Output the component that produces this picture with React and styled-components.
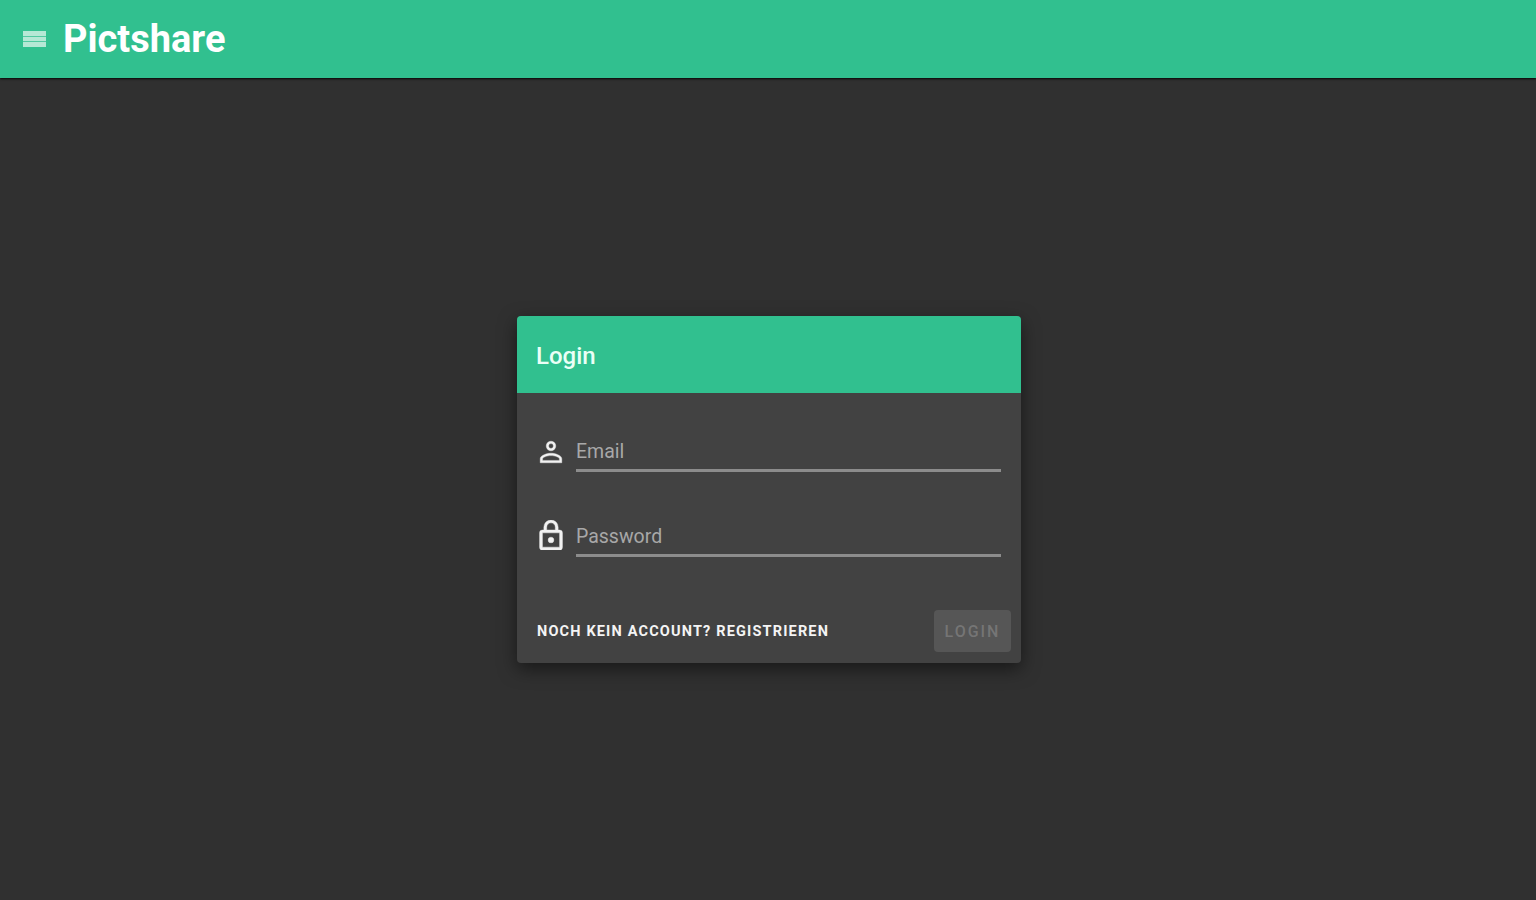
import React from 'react'
import styled, { createGlobalStyle } from 'styled-components'

const GlobalStyle = createGlobalStyle`
  html, body {
    margin: 0;
    height: 100%;
    background: #303030;
  }
  #root {
    height: 100%;
  }
`

const Page = styled.div`
  height: 900px;
  display: flex;
  flex-direction: column;
  overflow: hidden;
  font-family: Roboto, "Liberation Sans", sans-serif;
`

const AppBar = styled.header`
  height: 78px;
  flex: none;
  display: flex;
  align-items: center;
  padding-left: 23px;
  background: #31c08f;
  box-shadow: 0 1px 2px rgba(0, 0, 0, 0.9);
  position: relative;
`

const MenuIcon = styled.svg`
  width: 23px;
  height: 18px;
  margin-right: 17px;
  fill: #b5e8d5;
`

const Title = styled.h1`
  margin: 0;
  font-size: 38px;
  line-height: 78px;
  font-weight: 700;
  color: #fff;
`

const Main = styled.main`
  flex: 1;
  display: flex;
  align-items: center;
  justify-content: center;
  padding-left: 2px;
`

const Card = styled.section`
  width: 504px;
  height: 347px;
  display: flex;
  flex-direction: column;
  border-radius: 4px;
  overflow: hidden;
  background: #424242;
  box-shadow: 0 6px 18px rgba(0, 0, 0, 0.5);
`

const CardHeader = styled.div`
  height: 77px;
  flex: none;
  display: flex;
  align-items: center;
  padding: 3px 0 0 19px;
  box-sizing: border-box;
  background: #31c08f;
  color: #eafff6;
  font-size: 24px;
  font-weight: 500;
`

const Fields = styled.div`
  display: flex;
  flex-direction: column;
  gap: 51px;
  padding: 45px 20px 0 21px;
`

const Field = styled.div`
  display: flex;
  align-items: flex-start;
  gap: 12px;
  height: 34px;
`

const FieldIcon = styled.svg`
  width: 26px;
  height: ${(p) => p.$h}px;
  margin-top: ${(p) => p.$top}px;
  flex: none;
  fill: #f2f2f2;
  stroke: #f2f2f2;
  stroke-width: 0.3;
`

const InputLine = styled.div`
  flex: 1;
  height: 34px;
  box-sizing: border-box;
  border-bottom: 3px solid #8c8c8c;
  color: #a8a8a8;
  font-size: 19.5px;
  line-height: 28px;
`

const Actions = styled.div`
  margin-top: auto;
  display: flex;
  align-items: center;
  justify-content: space-between;
  padding: 0 10px 11px 20px;
`

const RegisterLink = styled.a`
  color: #f4f4f4;
  font-size: 14.5px;
  line-height: 20px;
  padding-top: 2px;
  font-weight: 700;
  letter-spacing: 1.17px;
  text-transform: uppercase;
`

const LoginButton = styled.button`
  width: 77px;
  height: 42px;
  padding: 2px 0 0;
  border: 0;
  border-radius: 4px;
  background: #565656;
  color: #757575;
  font-family: inherit;
  font-size: 16px;
  font-weight: 500;
  letter-spacing: 2px;
`

export default function App() {
  return (
    <Page>
      <GlobalStyle />
      <AppBar>
        <MenuIcon viewBox="0 0 23 18">
          <path d="M0 1h23v5H0zM0 6.800h23v4.400H0zM0 12h23v5H0z" />
        </MenuIcon>
        <Title>Pictshare</Title>
      </AppBar>
      <Main>
        <Card>
          <CardHeader>Login</CardHeader>
          <Fields>
            <Field>
              <FieldIcon $h={24} $top={2} viewBox="2 2 20 20">
                <path d="M12 3a4 4 0 1 1 0 8 4 4 0 0 1 0-8zm0 2a2 2 0 1 0 0 4 2 2 0 0 0 0-4zm0 8c3.200 0 9 1.600 9 4.600V21H3v-3.400C3 14.600 8.800 13 12 13zm0 2c-3 0-6.700 1.400-7 2.600V19h14v-1.400c-.3-1.200-4-2.600-7-2.600z" />
              </FieldIcon>
              <InputLine>Email</InputLine>
            </Field>
            <Field>
              <FieldIcon $h={30} $top={-3} viewBox="3 1 18 21">
                <path d="M18 8h-1V6a5 5 0 0 0-10 0v2H6a2 2 0 0 0-2 2v10a2 2 0 0 0 2 2h12a2 2 0 0 0 2-2V10a2 2 0 0 0-2-2zM9 6a3 3 0 0 1 6 0v2H9V6zm9 14H6V10h12v10zm-6-3a2 2 0 1 0 0-4 2 2 0 0 0 0 4z" />
              </FieldIcon>
              <InputLine>Password</InputLine>
            </Field>
          </Fields>
          <Actions>
            <RegisterLink>Noch kein Account? Registrieren</RegisterLink>
            <LoginButton disabled>LOGIN</LoginButton>
          </Actions>
        </Card>
      </Main>
    </Page>
  )
}
